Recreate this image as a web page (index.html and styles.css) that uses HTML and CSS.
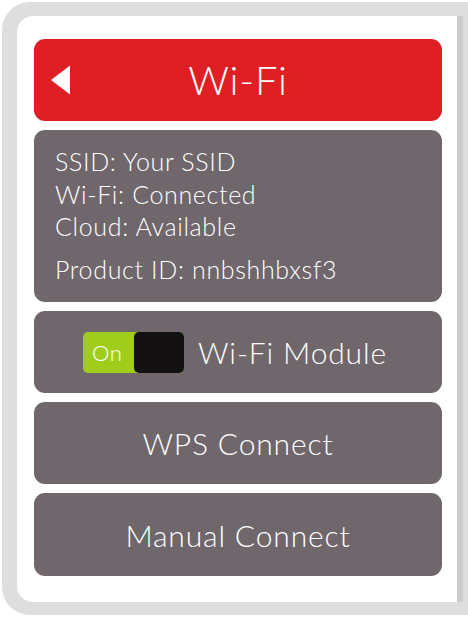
FILE: index.html
```html
<!DOCTYPE html>
<html>
<head>
<meta charset="utf-8">
<link rel="stylesheet" href="styles.css">
</head>
<body>
<div class="device">
  <div class="screen">
    <div class="header">
      <svg class="back" width="19" height="30" viewBox="0 0 19 30"><polygon points="0,15 19,0.5 19,29.5" fill="#fff"/></svg>
      <span class="title">Wi-Fi</span>
    </div>
    <div class="info">
      <div class="line">SSID: Your SSID</div>
      <div class="line">Wi-Fi: Connected</div>
      <div class="line">Cloud: Available</div>
      <div class="line pid">Product ID: nnbshhbxsf3</div>
    </div>
    <div class="row">
      <div class="toggle"><span class="on">On</span><span class="knob"></span></div>
      <span class="label">Wi-Fi Module</span>
    </div>
    <div class="row"><span class="label">WPS Connect</span></div>
    <div class="row last"><span class="label">Manual Connect</span></div>
  </div>
</div>
</body>
</html>
```
FILE: styles.css
```css
html, body {
  margin: 0;
  padding: 0;
  background: #ffffff;
}
body {
  font-family: "Lato", "Liberation Sans", sans-serif;
  font-weight: 400;
  color: #ffffff;
  overflow: hidden;
}
.device {
  margin: 2px 0 0 2px;
  width: 466px;
  height: 613px;
  box-sizing: border-box;
  background: #dedede;
  border-radius: 28px 0 0 28px;
  padding: 14px 5px 13px 15px;
}
.screen {
  height: 100%;
  box-sizing: border-box;
  background: #ffffff;
  border-right: 6px solid #cbcbcb;
  border-radius: 16px 0 0 16px;
  padding: 23px 15px 0 17px;
  display: flex;
  flex-direction: column;
  gap: 9px;
}
.header {
  position: relative;
  height: 82px;
  background: #e01f25;
  border-radius: 11px;
  display: flex;
  align-items: center;
  justify-content: center;
}
.back {
  position: absolute;
  left: 17px;
  top: 26px;
}
.title {
  font-size: 40px;
  font-weight: 300;
  letter-spacing: 0.8px;
}
.info {
  height: 172px;
  box-sizing: border-box;
  background: #6f676b;
  border-radius: 11px;
  padding: 15px 0 0 21px;
  font-size: 25px;
  font-weight: 300;
  line-height: 32.5px;
  letter-spacing: 0.65px;
}
.pid {
  margin-top: 10px;
}
.row {
  height: 82px;
  background: #6f676b;
  border-radius: 11px;
  display: flex;
  align-items: center;
  justify-content: center;
  gap: 14px;
}
.row.last {
  height: 83px;
}
.label {
  font-size: 30px;
  font-weight: 300;
  letter-spacing: 0.85px;
}
.toggle {
  width: 101px;
  height: 41px;
  background: #a0cd1b;
  border-radius: 5px;
  display: flex;
  align-items: center;
  margin-left: -6px;
}
.on {
  flex: 1;
  font-size: 22px;
  font-weight: 300;
  padding-left: 9px;
  letter-spacing: 0.5px;
}
.knob {
  width: 50px;
  height: 41px;
  background: #141113;
  border-radius: 5px;
}
```
